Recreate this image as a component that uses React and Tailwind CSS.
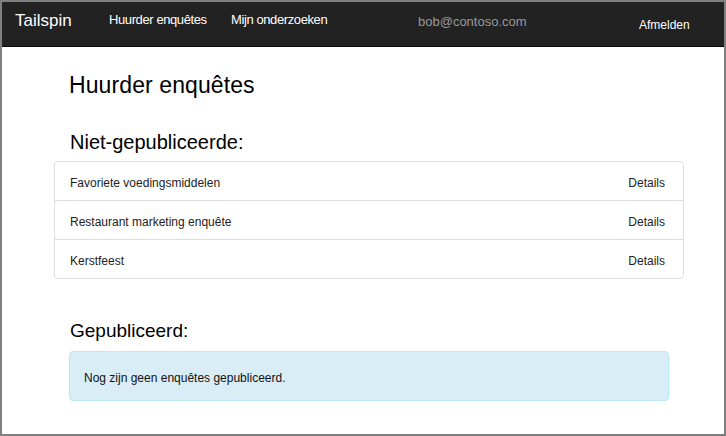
import React from "react";

// Lijst met niet-gepubliceerde enquêtes
const unpublished = [
  "Favoriete voedingsmiddelen",
  "Restaurant marketing enquête",
  "Kerstfeest",
];

const App = () => {
  return (
    <div className="w-[726px] h-[436px] border-2 border-[#7f7f7f] bg-white overflow-hidden flex flex-col font-['Liberation_Sans',Arial,sans-serif] text-[#222]">
      {/* Navigatiebalk */}
      <nav className="h-[45px] shrink-0 bg-[#222222] border-b border-[#080808] flex items-start pl-[13px] text-white">
        <div className="w-[94px] mt-[9px] text-[17px] leading-[20px]">Tailspin</div>
        <div className="w-[122px] mt-[8px] text-[13px] leading-[20px] tracking-[-0.4px]">Huurder enquêtes</div>
        <div className="w-[187px] mt-[8px] text-[13px] leading-[20px] tracking-[-0.4px]">Mijn onderzoeken</div>
        <div className="w-[221px] mt-[10px] text-[13px] leading-[20px] text-[#999999]">bob@contoso.com</div>
        <div className="mt-[13px] text-[12px] leading-[20px]">Afmelden</div>
      </nav>

      {/* Inhoud */}
      <main className="flex flex-col">
        <h2 className="ml-[67px] mt-[24px] text-[23px] leading-[28px] text-black tracking-[0.1px]">Huurder enquêtes</h2>

        <h3 className="ml-[68px] mt-[31px] text-[20px] leading-[24px] text-black">Niet-gepubliceerde:</h3>

        <ul className="ml-[52px] mt-[7px] w-[630px] border border-[#dddddd] rounded-[4px]">
          {unpublished.map((title, idx) => (
            <li
              key={idx}
              className={`flex justify-between pl-[15px] pr-[18px] pt-[13px] pb-[9px] text-[12px] leading-[16px] ${
                idx < unpublished.length - 1 ? "border-b border-[#dddddd]" : ""
              }`}
            >
              <span>{title}</span>
              <span>Details</span>
            </li>
          ))}
        </ul>

        <h3 className="ml-[68px] mt-[40px] text-[19px] leading-[24px] text-black">Gepubliceerd:</h3>

        <div className="ml-[67px] mt-[8px] w-[600px] border border-[#bce8f1] bg-[#d9edf7] rounded-[4px] pl-[14px] pt-[18px] pb-[14px] text-[12px] leading-[16px] text-[#111]">
          Nog zijn geen enquêtes gepubliceerd.
        </div>
      </main>
    </div>
  );
};

export default App;
